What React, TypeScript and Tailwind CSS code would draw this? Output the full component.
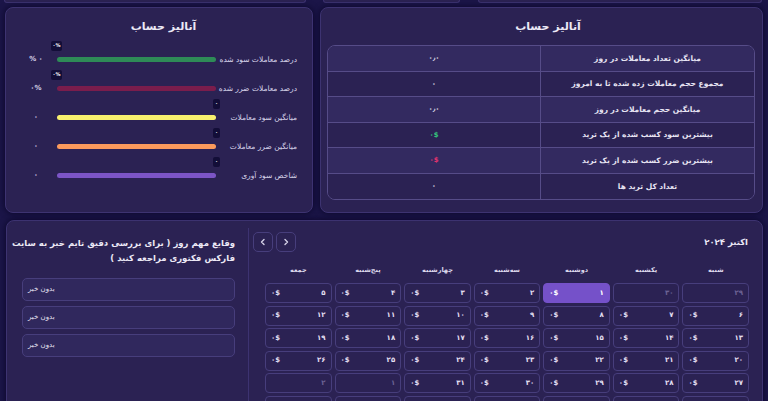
import React from "react";

const F = { fontFamily: '"DejaVu Sans", sans-serif' } as React.CSSProperties;

type BarRow = {
  label: string;
  value: string;
  color: string;
  badge: string;
  badgeLeft: boolean;
};

const bars: BarRow[] = [
  { label: "درصد معاملات سود شده", value: "% ۰", color: "bg-[#2e8b57]", badge: "۰%", badgeLeft: true },
  { label: "درصد معاملات ضرر شده", value: "۰%", color: "bg-[#7a1d4c]", badge: "۰%", badgeLeft: true },
  { label: "میانگین سود معاملات", value: "۰", color: "bg-[#f8f06e]", badge: "۰", badgeLeft: false },
  { label: "میانگین ضرر معاملات", value: "۰", color: "bg-[#fb9a5c]", badge: "۰", badgeLeft: false },
  { label: "شاخص سود آوری", value: "۰", color: "bg-[#7c55c6]", badge: "۰", badgeLeft: false },
];

const tableRows: { label: string; value: string; cls: string }[] = [
  { label: "میانگین تعداد معاملات در روز", value: "۰٫۰", cls: "text-[#e6e3f2]" },
  { label: "مجموع حجم معاملات زده شده تا به امروز", value: "۰", cls: "text-[#e6e3f2]" },
  { label: "میانگین حجم معاملات در روز", value: "۰٫۰", cls: "text-[#e6e3f2]" },
  { label: "بیشترین سود کسب شده از یک ترید", value: "۰$", cls: "text-[#34c37a]" },
  { label: "بیشترین ضرر کسب شده از یک ترید", value: "۰$", cls: "text-[#e0336f]" },
  { label: "تعداد کل ترید ها", value: "۰", cls: "text-[#e6e3f2]" },
];

const days = ["شنبه", "یکشنبه", "دوشنبه", "سه‌شنبه", "چهارشنبه", "پنج‌شنبه", "جمعه"];

const fa = (n: number) => String(n).replace(/\d/g, (d) => "۰۱۲۳۴۵۶۷۸۹"[Number(d)]);

type Cell = { n: number; faded: boolean; active?: boolean };
const cells: Cell[] = [];
cells.push({ n: 29, faded: true }, { n: 30, faded: true });
for (let i = 1; i <= 31; i++) cells.push({ n: i, faded: false, active: i === 1 });
cells.push({ n: 1, faded: true }, { n: 2, faded: true });
for (let i = 3; i <= 9; i++) cells.push({ n: i, faded: true });

function Chevron({ dir }: { dir: "left" | "right" }) {
  return (
    <svg width="8" height="8" viewBox="0 0 8 8" fill="none">
      <path
        d={dir === "left" ? "M5 1.5 L2.5 4 L5 6.5" : "M3 1.5 L5.5 4 L3 6.5"}
        stroke="#d4d0e6"
        strokeWidth="1.4"
        strokeLinecap="round"
        strokeLinejoin="round"
      />
    </svg>
  );
}

export default function App() {
  return (
    <div style={F} className="w-[768px] h-[401px] overflow-hidden bg-[#1b1548] text-[#dcd8ec]">
      {/* cut-off cards from above */}
      <div className="flex h-[3px]">
        <div className="ml-[4px] w-[302px] h-[3px] bg-[#2b2253] border-b border-x border-[#3d3371] rounded-b-[6px]" />
        <div className="ml-[17px] w-[137px] h-[3px] bg-[#2b2253] border-b border-x border-[#3d3371] rounded-b-[6px]" />
        <div className="ml-[18px] w-[284px] h-[3px] bg-[#2b2253] border-b border-x border-[#3d3371] rounded-b-[6px]" />
      </div>

      {/* second row */}
      <div className="flex mt-[4px] pl-[5px] gap-[7px] h-[206px]">
        {/* bars card */}
        <div className="w-[308px] h-full bg-[#2b2253] border border-[#3d3371] rounded-[8px] shadow-[0_0_6px_rgba(8,4,36,0.9)] pt-[12px] pl-[20px] pr-[15px]">
          <div dir="rtl" className="text-center text-[11px] font-bold leading-[14px] text-[#ece9f6] pl-[4px]">
            آنالیز حساب
          </div>
          <div className="mt-[11px] flex flex-col">
            {bars.map((b, i) => (
              <div key={i} className="flex items-center h-[29px]">
                <div dir="ltr" className="w-[20px] text-center text-[7px] font-bold text-[#d8d4ea] whitespace-nowrap">
                  {b.value}
                </div>
                <div className="relative ml-[11px] w-[159px] h-[5px]">
                  <div className={`w-full h-full rounded-full ${b.color}`} />
                  <div
                    dir="ltr"
                    className={
                      b.badgeLeft
                        ? "absolute bottom-[11px] -left-[6px] w-[11px] h-[10px] rounded-[2px] bg-[#130e38] text-[5px] font-bold text-white flex items-center justify-center"
                        : "absolute bottom-[11px] -right-[4px] w-[7px] h-[10px] rounded-[2px] bg-[#130e38] text-[5px] font-bold text-white flex items-center justify-center"
                    }
                  >
                    {b.badge}
                  </div>
                </div>
                <div dir="rtl" className="flex-1 text-right text-[7.5px] text-[#d8d4ea] whitespace-nowrap">
                  {b.label}
                </div>
              </div>
            ))}
          </div>
        </div>

        {/* table card */}
        <div className="w-[443px] h-full bg-[#2b2253] border border-[#3d3371] rounded-[8px] shadow-[0_0_6px_rgba(8,4,36,0.9)] pt-[12px] pl-[6px] pr-[7px]">
          <div dir="rtl" className="text-center text-[11px] font-bold leading-[14px] text-[#ece9f6] pl-[14px]">
            آنالیز حساب
          </div>
          <div className="mt-[11px] border border-[#564c88] rounded-[8px] overflow-hidden">
            {tableRows.map((r, i) => (
              <div
                key={i}
                className={`grid grid-cols-2 h-[25.5px] ${i % 2 === 0 ? "bg-[#332a60]" : "bg-[#2b2253]"} ${
                  i < tableRows.length - 1 ? "border-b border-[#564c88]" : ""
                }`}
              >
                <div dir="ltr" className={`flex items-center justify-center border-r border-[#564c88] text-[7px] font-bold ${r.cls}`}>
                  {r.value}
                </div>
                <div dir="rtl" className="flex items-center justify-center text-[7.5px] font-bold text-[#e6e3f2] whitespace-nowrap">
                  {r.label}
                </div>
              </div>
            ))}
          </div>
        </div>
      </div>

      {/* third row */}
      <div className="mt-[7px] ml-[6px] w-[757px] h-[200px] bg-[#2b2253] border border-[#3d3371] rounded-[8px] shadow-[0_0_6px_rgba(8,4,36,0.9)] pt-[7px] flex">
        {/* news */}
        <div className="w-[241px] pl-[15px] pr-[13px] pt-[8px]">
          <div dir="rtl" className="text-right text-[8.5px] font-bold leading-[15px] text-[#ece9f6] whitespace-nowrap">
            وقایع مهم روز ( برای بررسی دقیق تایم خبر به سایت
            <br />
            فارکس فکتوری مراجعه کنید )
          </div>
          <div className="mt-[12px] flex flex-col gap-[5px]">
            {[0, 1, 2].map((i) => (
              <div
                key={i}
                className="h-[23px] rounded-[5px] border border-[#473e7c] bg-[#30285d] flex items-center pl-[5px]"
              >
                <span dir="rtl" className="text-[7px] text-[#e6e3f2]">
                  بدون خبر
                </span>
              </div>
            ))}
          </div>
        </div>

        {/* calendar */}
        <div className="flex-1 border-l border-[#3d3371] pl-[4px] pr-[13px] pt-[4px]">
          <div className="flex items-center justify-between">
            <div className="flex gap-[3px]">
              <div className="w-[20px] h-[20px] rounded-[5px] border border-[#473e7c] flex items-center justify-center">
                <Chevron dir="left" />
              </div>
              <div className="w-[20px] h-[20px] rounded-[5px] border border-[#473e7c] flex items-center justify-center">
                <Chevron dir="right" />
              </div>
            </div>
            <div dir="rtl" className="text-[8.5px] font-bold text-[#ece9f6] pr-[1px]">
              اکتبر ۲۰۲۴
            </div>
          </div>
          <div className="pl-[12px]">
            <div dir="rtl" className="mt-[13px] grid grid-cols-7 gap-x-[3px]">
              {days.map((d) => (
                <div key={d} className="text-center text-[6.5px] font-bold text-[#dcd8ec] leading-[10px]">
                  {d}
                </div>
              ))}
            </div>
            <div dir="rtl" className="mt-[8px] grid grid-cols-7 gap-x-[3px] gap-y-[2.5px]">
              {cells.map((c, i) => (
                <div
                  key={i}
                  className={`h-[20px] rounded-[4px] border flex items-center justify-between px-[5px] text-[7px] font-bold ${
                    c.active ? "bg-[#7551c9] border-[#7551c9] text-white" : "border-[#473e7c] text-[#e2def0]"
                  }`}
                >
                  <span className={c.faded ? "text-[#6c6394]" : ""}>{fa(c.n)}</span>
                  {!c.faded && <span dir="ltr">{"۰$"}</span>}
                </div>
              ))}
            </div>
          </div>
        </div>
      </div>
    </div>
  );
}
